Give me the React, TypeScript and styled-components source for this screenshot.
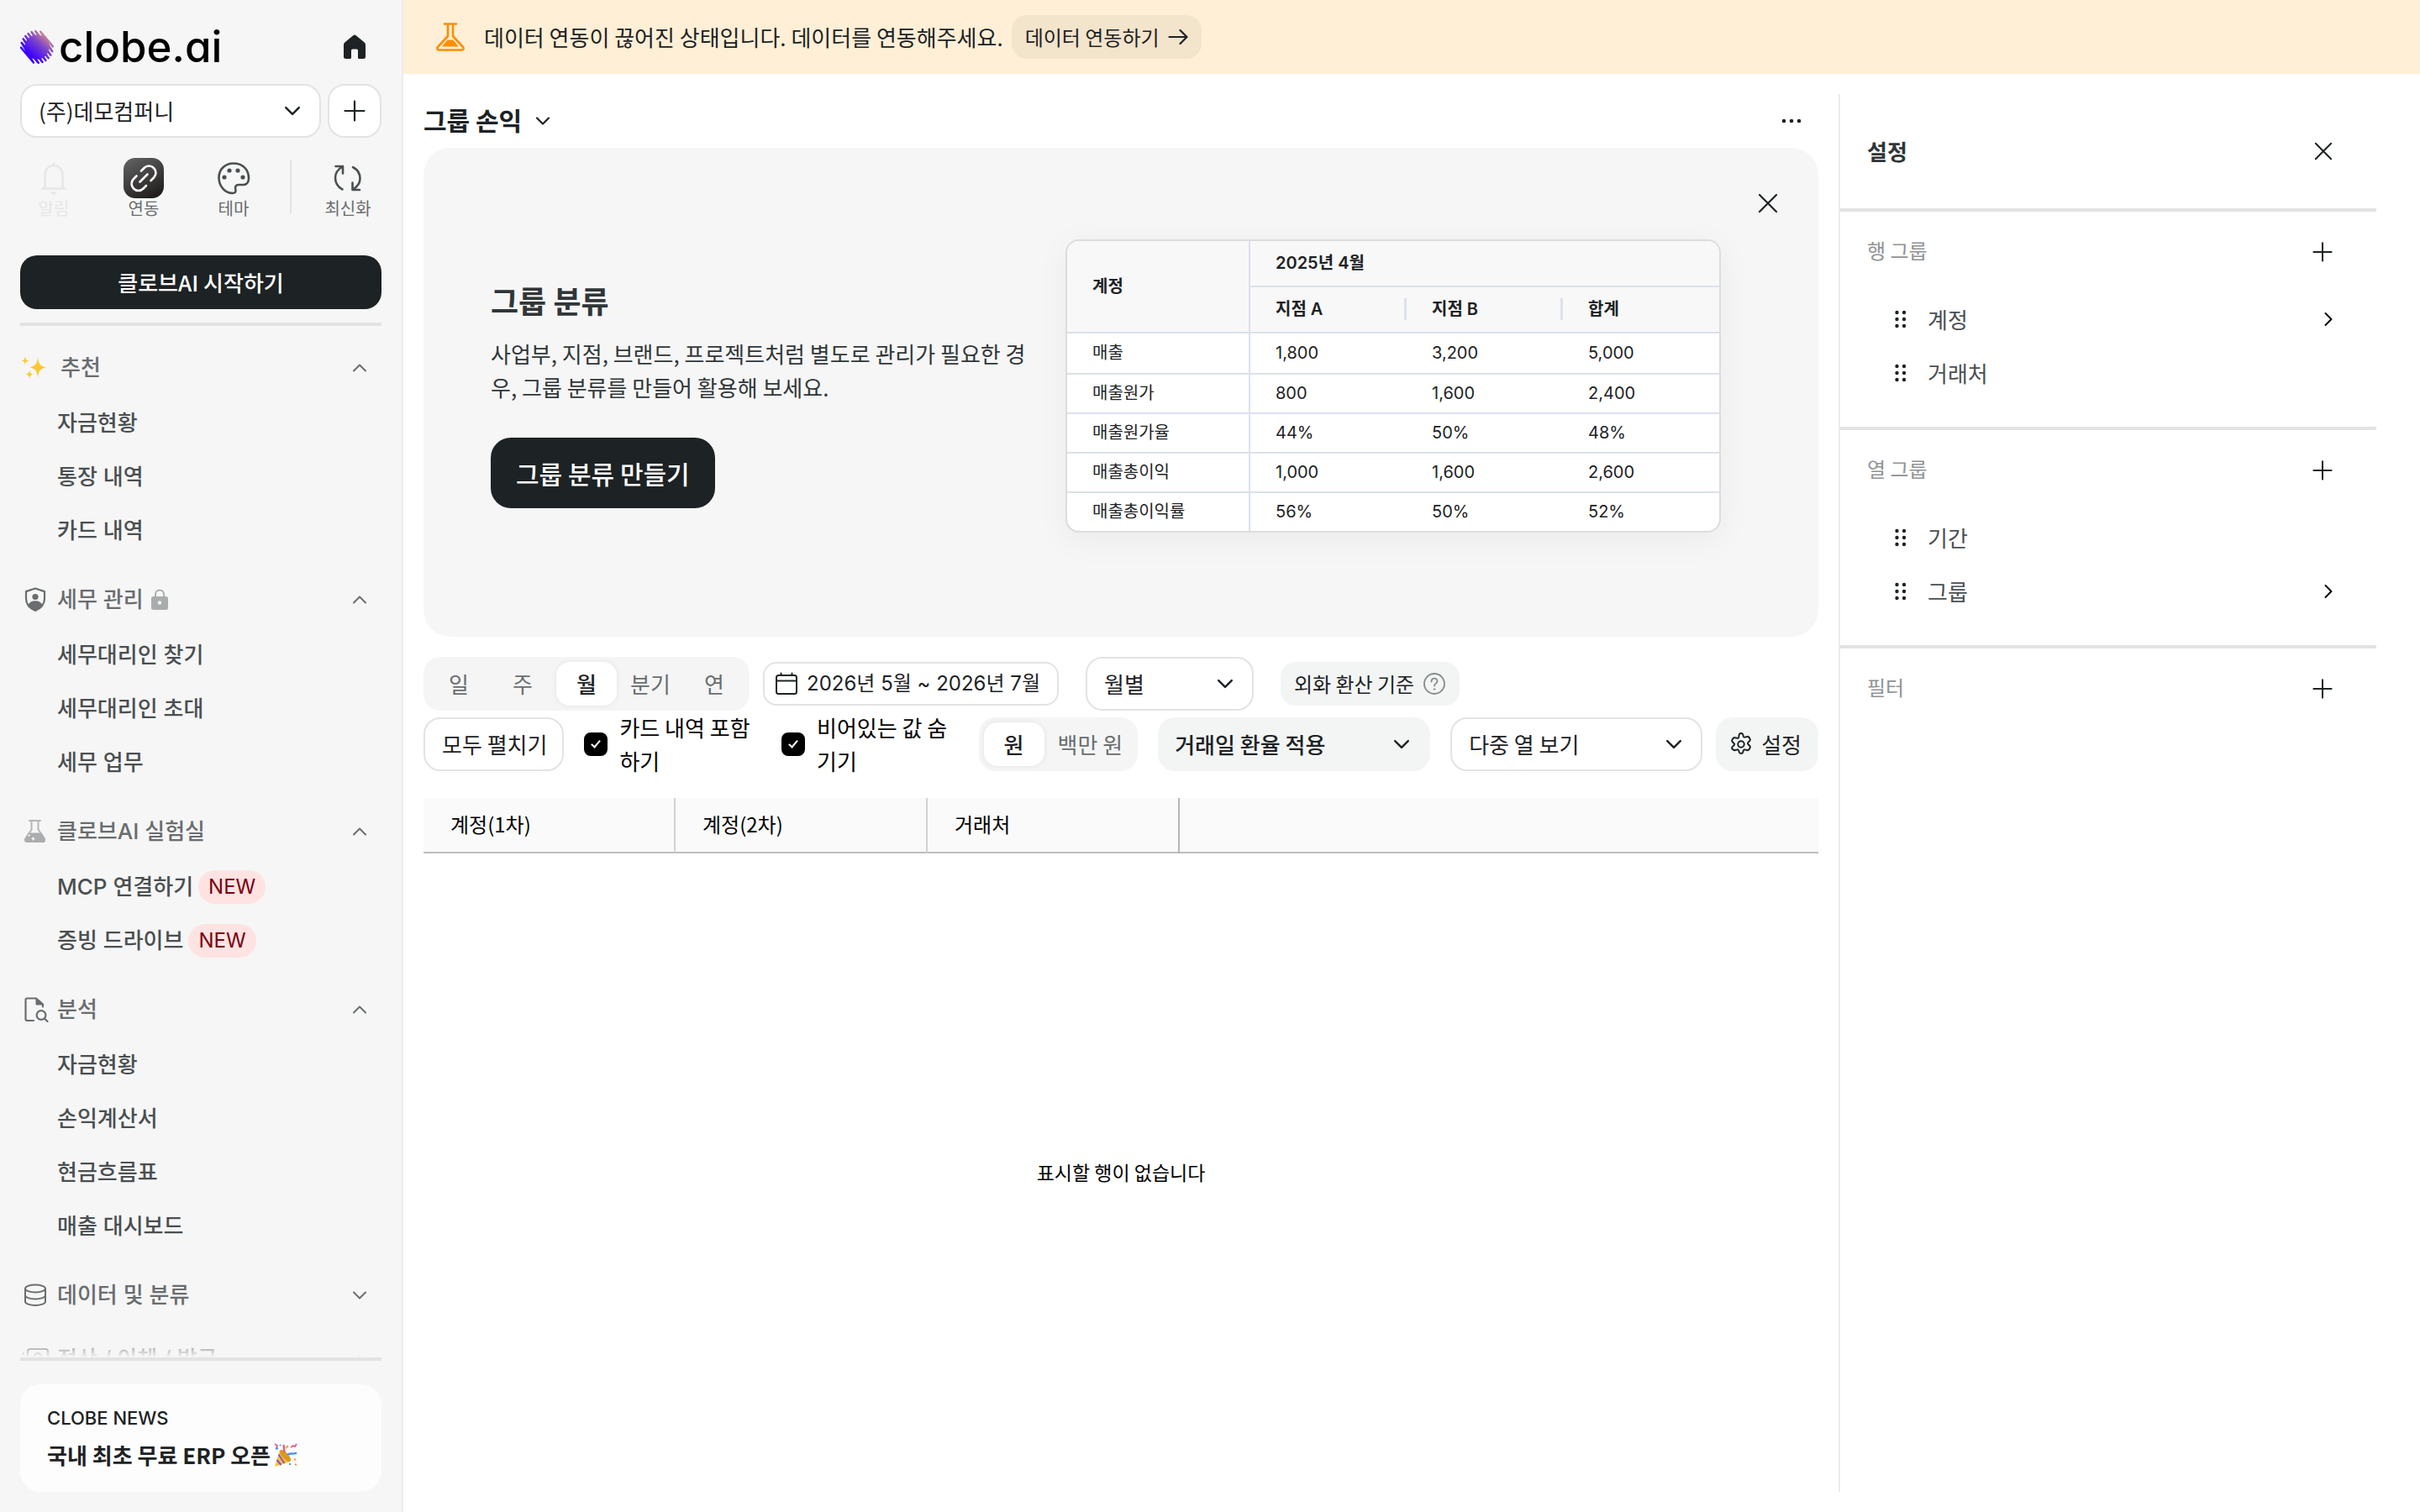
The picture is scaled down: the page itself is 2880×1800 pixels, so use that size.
import React, { useState } from "react";
import styled, { createGlobalStyle, css } from "styled-components";

const krFont = `"Noto Sans CJK KR", "Noto Sans", sans-serif`;
const mixFont = `Inter, "Noto Sans CJK KR", "Noto Sans", sans-serif`;

const color = {
  ink: "#1d2224",
  item: "#4a4f51",
  section: "#696d6f",
  faint: "#8f9294",
  line: "#e3e3e3",
  side: "#f6f6f6",
  soft: "#f3f5f4",
  cell: "#dbe1ec",
};

const GlobalStyle = createGlobalStyle`
  *, *::before, *::after { box-sizing: border-box; }
  body { margin: 0; background: #fff; color: ${color.ink}; font-family: ${krFont}; font-size: 26px; line-height: 40px; }
  button, select, input { font: inherit; color: inherit; margin: 0; }
  button { border: 0; background: none; padding: 0; cursor: pointer; }
  a { color: inherit; text-decoration: none; }
  h1, h2, h3, p, ul { margin: 0; padding: 0; }
  ul { list-style: none; }
  svg { display: block; flex: none; }
`;

/* ---------- icons ---------- */

type IconProps = { size?: number; w?: number; stroke?: string };

const Chevron = ({ dir = "down", size = 18, w = 2, stroke = "currentColor" }: IconProps & { dir?: "up" | "down" | "right" }) => {
  const d = { down: "M2 5.5l7 7 7-7", up: "M2 12.5l7-7 7 7", right: "M5.5 2l7 7-7 7" }[dir];
  return (
    <svg width={size} height={size} viewBox="0 0 18 18" fill="none" stroke={stroke} strokeWidth={w} strokeLinecap="round" strokeLinejoin="round">
      <path d={d} />
    </svg>
  );
};

const Plus = ({ size = 26 }: IconProps) => (
  <svg width={size} height={size} viewBox="0 0 26 26" fill="none" stroke={color.ink} strokeWidth="2.2" strokeLinecap="round">
    <path d="M13 1.5v23M1.5 13h23" />
  </svg>
);

const Cross = ({ size = 24 }: IconProps) => (
  <svg width={size} height={size} viewBox="0 0 24 24" fill="none" stroke={color.ink} strokeWidth="2.2" strokeLinecap="round">
    <path d="M2 2l20 20M22 2L2 22" />
  </svg>
);

const LogoMark = () => {
  const n = 8;
  const pts: string[] = [];
  for (let i = 0; i < n; i++) {
    const t = -15 + (30 * i) / (n - 1);
    const half = Math.sqrt(19 * 19 - t * t);
    const cx = 20 + t * 0.77;
    const cy = 20 - t * 0.64;
    const dx = half * 0.64;
    const dy = half * 0.77;
    pts.push(`${cx - dx},${cy - dy}`, `${cx + dx},${cy + dy}`);
  }
  return (
    <svg width="40" height="40" viewBox="0 0 40 40" fill="none">
      <defs>
        <linearGradient id="mark" x1="12" y1="30" x2="34" y2="5" gradientUnits="userSpaceOnUse">
          <stop offset="0" stopColor="#3a00ff" />
          <stop offset="0.55" stopColor="#8048c8" />
          <stop offset="1" stopColor="#e29a86" />
        </linearGradient>
      </defs>
      <polyline points={pts.join(" ")} stroke="url(#mark)" strokeWidth="2.400" strokeLinejoin="round" strokeLinecap="round" />
      <circle cx="20" cy="20" r="14.500" fill="url(#mark)" />
    </svg>
  );
};

const Home = () => (
  <svg width="28" height="30" viewBox="0 0 28 30" fill={color.ink}>
    <path d="M12.3 1.3a2.6 2.6 0 0 1 3.4 0l10 8.2a3.6 3.6 0 0 1 1.3 2.8V26.500a2.500 2.500 0 0 1-2.500 2.500h-5a1.500 1.500 0 0 1-1.500-1.500v-8.500a1.500 1.500 0 0 0-1.500-1.500h-5a1.500 1.500 0 0 0-1.500 1.500v8.500a1.500 1.500 0 0 1-1.500 1.500h-5A2.500 2.500 0 0 1 1 26.500V12.300a3.600 3.600 0 0 1 1.300-2.800z" />
  </svg>
);

const Bell = () => (
  <svg width="48" height="48" viewBox="0 0 48 48" fill="none" stroke="currentColor" strokeWidth="2.6" strokeLinecap="round" strokeLinejoin="round">
    <path d="M24 8v-1.500M13.500 36V19.500a10.500 10.500 0 0 1 21 0V36M10.500 36.500h27" />
    <path d="M20.500 41h7L24 43.500z" fill="currentColor" strokeWidth="1" />
  </svg>
);

const LinkGlyph = () => (
  <svg width="48" height="48" viewBox="0 0 48 48" fill="none" stroke="#fff" strokeWidth="2.6" strokeLinecap="round" strokeLinejoin="round">
    <rect width="48" height="48" rx="14" fill="url(#linkbg)" stroke="none" />
    <defs>
      <linearGradient id="linkbg" x1="6" y1="0" x2="30" y2="48" gradientUnits="userSpaceOnUse">
        <stop offset="0" stopColor="#626262" />
        <stop offset="1" stopColor="#231f1f" />
      </linearGradient>
    </defs>
    <path d="M21 15.500l3.500-3.500a8 8 0 0 1 11.500 0 8 8 0 0 1 0 11.500l-3.500 3.500" />
    <path d="M27 33l-3.500 3.500a8 8 0 0 1-11.500 0 8 8 0 0 1 0-11.500l3.500-3.500" />
    <path d="M19.500 28.500l9-9" />
  </svg>
);

const Palette = () => (
  <svg width="48" height="48" viewBox="0 0 48 48" fill="none" stroke={color.item} strokeWidth="2.600" strokeLinejoin="round">
    <path d="M24 6.500C13.800 6.500 6.500 13.500 6.500 23.500c0 10.500 7.500 18.500 16 18.500 3.500 0 4.800-2 3.800-4.600-1-2.800.2-5.400 3.700-5.400h5.500c4 0 6.500-3 6.500-8C42 13 34 6.500 24 6.500z" />
    <g fill={color.item} stroke="none">
      <circle cx="19" cy="15" r="2.600" />
      <circle cx="29" cy="15" r="2.600" />
      <circle cx="13" cy="23" r="2.600" />
      <circle cx="35" cy="23" r="2.600" />
    </g>
  </svg>
);

const Refresh = () => (
  <svg width="48" height="48" viewBox="0 0 48 48" fill="none" stroke={color.item} strokeWidth="2.600" strokeLinecap="round" strokeLinejoin="round">
    <path d="M17.500 37.500C11 34 9 28 9 23.500c0-5 2.500-9.500 9-13.500M9.500 10H18v8.500" />
    <path d="M30 11c6.500 3.500 8.500 9 8.500 13.500 0 5-2.500 9.500-9 13.500M38 38h-8.500v-8.500" />
  </svg>
);

const Sparkles = () => (
  <svg width="30" height="28" viewBox="0 0 30 28" fill="#fdc72f">
    <path d="M20 1c1 8 2 10.500 10 12.500-8 1.500-9 4-10 12.500-1-8.500-2-11-10-12.500 8-2 9-4.500 10-12.500z" />
    <path d="M5 0c.5 3.800 1 4.700 4.500 5.500C6 6.200 5.500 7.200 5 11 4.500 7.200 4 6.200.5 5.500 4 4.700 4.500 3.800 5 0zM10 16c.5 3.800 1 4.700 4.500 5.800-3.500.7-4 1.700-4.500 5.700-.5-4-1-5-4.500-5.700C9 20.700 9.500 19.800 10 16z" />
  </svg>
);

const Shield = () => (
  <svg width="36" height="36" viewBox="0 0 36 36" fill="none">
    <path d="M18 4.500l11 3.600v8.400c0 7-4 11.500-11 14.500-7-3-11-7.500-11-14.500V8.100z" stroke={color.section} strokeWidth="2.200" strokeLinejoin="round" />
    <circle cx="18" cy="14.500" r="3.600" fill={color.section} />
    <path d="M9.500 24c2-3.500 5-4.700 8.500-4.700s6.500 1.200 8.500 4.700c-2 3.500-5 5.500-8.500 7-3.500-1.500-6.500-3.500-8.500-7z" fill={color.section} />
  </svg>
);

const Lock = () => (
  <svg width="22" height="26" viewBox="0 0 22 26" fill="none">
    <path d="M6 10V6.500a5 5 0 0 1 10 0V10" stroke="#a9acad" strokeWidth="2" />
    <rect x="1" y="9" width="20" height="16" rx="2.500" fill="#a9acad" />
    <circle cx="11" cy="16.500" r="2.200" fill="#f6f6f6" />
  </svg>
);

const Beaker = () => (
  <svg width="36" height="36" viewBox="0 0 36 36" fill="none">
    <path d="M11 5h13M13.500 5.500v10L6.500 26.500M21.500 5.500v10l7.500 11" stroke="#b4b6b8" strokeWidth="2" strokeLinecap="round" />
    <path d="M9.800 19.500h15.500l4.200 6.500c1.500 3.500 0 5-2.500 5H8.500C6 31 4 29.500 5.500 26z" fill="#abadaf" />
    <path d="M15.500 23.500c.4 2.200.8 2.600 3 3-2.200.4-2.600.8-3 3-.4-2.200-.8-2.600-3-3 2.200-.4 2.600-.8 3-3zM10.500 20.500c.3 1.500.5 1.700 2 2-1.500.3-1.700.5-2 2-.3-1.500-.5-1.700-2-2 1.500-.3 1.700-.5 2-2z" fill="#fff" />
  </svg>
);

const DocSearch = () => (
  <svg width="36" height="36" viewBox="0 0 36 36" fill="none" stroke={color.section} strokeWidth="2.200" strokeLinecap="round">
    <path d="M16 31H8.500A2 2 0 0 1 6.500 29V6.500a2 2 0 0 1 2-2H19l8 7v3" strokeLinejoin="round" />
    <path d="M19 4.500v7.500h8z" fill={color.section} strokeWidth="1" />
    <circle cx="25" cy="24.500" r="5.400" />
    <path d="M29 28.500l3.500 3.500" />
  </svg>
);

const Database = () => (
  <svg width="36" height="36" viewBox="0 0 36 36" fill="none" stroke={color.section} strokeWidth="2">
    <ellipse cx="18" cy="10" rx="12" ry="4.500" />
    <path d="M6 10v15.500c0 2.500 5.400 4.500 12 4.500s12-2 12-4.500V10M6 18c0 2.500 5.400 4.500 12 4.500s12-2 12-4.500" />
  </svg>
);

const Money = () => (
  <svg width="36" height="36" viewBox="0 0 36 36" fill="none" stroke={color.section} strokeWidth="2.200">
    <rect x="9" y="6" width="24" height="20" rx="3" />
    <circle cx="21" cy="15" r="4" />
    <path d="M4 11v1M4 17v1" strokeLinecap="round" />
  </svg>
);

const Party = () => (
  <svg width="28" height="28" viewBox="0 0 28 28" fill="none">
    <path d="M7 8.500L19.500 22 1 28z" fill="#f7c531" />
    <ellipse cx="13.500" cy="15" rx="3.600" ry="9" transform="rotate(-43 13.500 15)" fill="#d99a1c" />
    <path d="M5.500 13.500L12.500 24M3.500 20l5 6" stroke="#8d4fd3" strokeWidth="2" />
    <path d="M12 2c-1 3 1 5 0 9" stroke="#ee5c86" strokeWidth="2.400" />
    <path d="M16 14c3-3 7 0 11-2.500" stroke="#4a90f0" strokeWidth="2.400" />
    <path d="M1 1l3 2-1 3M20 5l3-2 2 1 2-3" stroke="#e8578b" strokeWidth="1.800" />
    <path d="M2 7l3-1M18 25h2M7 2l1 1" stroke="#4a90f0" strokeWidth="2" />
    <path d="M24 19l2 1M25 25l2 1M14 6l3-3" stroke="#e8a33a" strokeWidth="2" />
  </svg>
);

const Flask = () => (
  <svg width="36" height="36" viewBox="0 0 36 36" fill="none" stroke="#ff8d00" strokeWidth="2.600" strokeLinecap="round" strokeLinejoin="round">
    <path d="M11 2.500h14M15 2.500V17L3 30c-1.500 2-.5 3.500 1.500 3.500h27c2 0 3-1.500 1.500-3.500L21 17V2.500" />
    <path d="M15 22h6l6 7H9z" fill="#ff8d00" strokeWidth="1" />
  </svg>
);

const Arrow = () => (
  <svg width="24" height="20" viewBox="0 0 24 20" fill="none" stroke={color.ink} strokeWidth="2.200" strokeLinecap="round" strokeLinejoin="round">
    <path d="M1.500 10h21M14.500 2l8 8-8 8" />
  </svg>
);

const Dots = () => (
  <svg width="24" height="24" viewBox="0 0 24 24" fill={color.ink}>
    <circle cx="3" cy="12" r="2.300" />
    <circle cx="12" cy="12" r="2.300" />
    <circle cx="21" cy="12" r="2.300" />
  </svg>
);

const Calendar = () => (
  <svg width="28" height="28" viewBox="0 0 28 28" fill="none" stroke={color.ink} strokeWidth="2" strokeLinecap="round" strokeLinejoin="round">
    <rect x="2" y="4" width="24" height="22" rx="2.500" />
    <path d="M2 10.500h24M7.500 1.500V4M20.500 1.500V4" />
  </svg>
);

const Question = () => (
  <svg width="28" height="28" viewBox="0 0 28 28" fill="none" stroke="#858a8b" strokeWidth="1.800" strokeLinecap="round">
    <circle cx="14" cy="14" r="12" />
    <path d="M10.500 11.500c0-5 7-5 7-.6 0 2.600-3.500 2.800-3.500 5.600" />
    <circle cx="14" cy="20.500" r=".8" fill="#858a8b" strokeWidth="1" />
  </svg>
);

const Gear = () => (
  <svg width="28" height="28" viewBox="0 0 24 24" fill="none" stroke={color.ink} strokeWidth="1.700" strokeLinejoin="round">
    <path d="M12 .8c1 0 1.700.4 2 1.500l.4 1.600c.2.700.9 1.100 1.600.9l2-.5c1-.3 1.800 0 2.300.9l.7 1.200c.5.900.4 1.600-.3 2.300l-1.500 1.500c-.5.500-.5 1.300 0 1.800l1.500 1.500c.7.700.8 1.500.3 2.400l-.7 1.200c-.5.900-1.300 1.200-2.300.9l-2-.5c-.7-.2-1.400.2-1.600.9l-.4 1.600c-.3 1.100-1 1.500-2 1.500s-1.700-.4-2-1.500l-.4-1.600c-.2-.7-.9-1.100-1.600-.9l-2 .5c-1 .3-1.800 0-2.300-.9L3 16.900c-.5-.9-.4-1.700.3-2.400L4.800 13c.5-.5.500-1.300 0-1.800L3.300 9.700c-.7-.7-.8-1.400-.3-2.300l.7-1.200c.5-.9 1.300-1.200 2.300-.9l2 .5c.7.200 1.400-.2 1.600-.9L10 2.300c.3-1.100 1-1.500 2-1.500z" />
    <circle cx="12" cy="12" r="3.200" />
  </svg>
);

const Grip = () => (
  <svg width="16" height="24" viewBox="0 0 16 24" fill={color.ink}>
    {[4, 12, 20].map((y) => (
      <React.Fragment key={y}>
        <circle cx="3.500" cy={y} r="2.200" />
        <circle cx="12" cy={y} r="2.200" />
      </React.Fragment>
    ))}
  </svg>
);

/* ---------- shell ---------- */

const Shell = styled.div`
  display: grid;
  grid-template-columns: 480px minmax(0, 1fr);
  height: 100vh;
`;

const Sidebar = styled.aside`
  display: flex;
  flex-direction: column;
  min-height: 0;
  padding: 24px;
  background: ${color.side};
  border-right: 2px solid #ededed;
`;

const Brand = styled.div`
  display: flex;
  align-items: center;
  justify-content: space-between;
  height: 76px;
  padding: 0 18px 12px 0;
`;

const Logo = styled.a`
  display: flex;
  align-items: center;
  gap: 6px;
  color: #000;
  font: 500 51px/60px Inter, sans-serif;
  font-feature-settings: "cv11" 1;
`;

const CompanyRow = styled.div`
  display: grid;
  grid-template-columns: minmax(0, 1fr) 64px;
  gap: 8px;
`;

const outlined = css`
  border: 2px solid ${color.line};
  background: #fff;
`;

const SelectWrap = styled.div<{ $width?: number; $soft?: boolean }>`
  display: grid;
  flex: none;
  align-items: center;
  width: ${(p) => (p.$width ? `${p.$width}px` : "auto")};
  > * { grid-area: 1 / 1; }
  > svg { justify-self: end; margin-right: 24px; pointer-events: none; }
  > select {
    appearance: none;
    width: 100%;
    height: 64px;
    padding: 0 48px 0 20px;
    border-radius: 20px;
    font-weight: ${(p) => (p.$soft ? 500 : 400)};
    ${(p) => (p.$soft ? css`border: 0; background: ${color.soft};` : outlined)}
  }
`;

const SquareButton = styled.button`
  display: grid;
  place-items: center;
  height: 64px;
  border-radius: 20px;
  ${outlined}
`;

const Shortcuts = styled.div`
  display: flex;
  justify-content: space-between;
  align-items: center;
  margin: 24px 0 44px;
`;

const Shortcut = styled.button<{ $muted?: boolean }>`
  display: flex;
  flex-direction: column;
  align-items: center;
  width: 80px;
  font-size: 20px;
  line-height: 24px;
  white-space: nowrap;
  color: ${(p) => (p.$muted ? "#e7e7e7" : color.section)};
`;

const Separator = styled.span`
  width: 2px;
  height: 64px;
  margin-bottom: 4px;
  background: ${color.line};
`;

const StartButton = styled.button`
  flex: none;
  height: 64px;
  margin-bottom: 16px;
  border-radius: 20px;
  background: ${color.ink};
  color: #fff;
  font-weight: 500;
`;

const Nav = styled.nav`
  position: relative;
  flex: 1;
  min-height: 0;
  overflow: hidden;
  display: flex;
  flex-direction: column;
  gap: 16px;
  padding-top: 20px;
  border-top: 4px solid ${color.line};
  border-bottom: 4px solid ${color.line};
  &::after {
    content: "";
    position: absolute;
    inset: auto 0 0;
    height: 24px;
    background: linear-gradient(rgba(246, 246, 246, 0), ${color.side});
  }
`;

const NavHead = styled.button`
  display: flex;
  align-items: center;
  gap: 8px;
  width: 100%;
  height: 60px;
  padding-right: 17px;
  color: ${color.section};
  font-family: ${mixFont};
  font-weight: 500;
  > svg:last-child { margin-left: auto; }
`;

const NavIcon = styled.span<{ $emoji?: boolean }>`
  display: grid;
  place-items: center;
  width: ${(p) => (p.$emoji ? 40 : 36)}px;
  padding-right: ${(p) => (p.$emoji ? 8 : 0)}px;
`;

const NavList = styled.ul`
  padding: 4px 0;
`;

const NavLink = styled.a`
  display: flex;
  align-items: center;
  gap: 6px;
  height: 64px;
  padding-left: 44px;
  color: ${color.item};
  font-family: ${mixFont};
  font-weight: 500;
`;

const NewTag = styled.span`
  padding: 0 12px;
  border-radius: 20px;
  background: #ffe3e3;
  color: #79000d;
  font-size: 24px;
  font-weight: 400;
`;

const News = styled.a`
  flex: none;
  display: block;
  margin-top: 28px;
  padding: 18px 32px 22px;
  border-radius: 24px;
  background: #fdfdfd;
  line-height: 44px;
`;

const NewsLabel = styled.div`
  font-family: Inter, sans-serif;
  font-size: 22px;
  font-weight: 500;
`;

const NewsTitle = styled.div`
  display: flex;
  align-items: center;
  gap: 4px;
  font-weight: 700;
`;

/* ---------- main ---------- */

const Page = styled.div`
  display: flex;
  flex-direction: column;
  min-width: 0;
`;

const Banner = styled.div`
  display: flex;
  align-items: center;
  height: 88px;
  padding-left: 38px;
  background: #ffefd6;
`;

const BannerText = styled.p`
  margin: 0 10px 0 22px;
`;

const softButton = css`
  display: inline-flex;
  align-items: center;
  flex: none;
  height: 52px;
  border-radius: 18px;
  background: ${color.soft};
  font-size: 24px;
  white-space: nowrap;
`;

const BannerButton = styled.button`
  ${softButton}
  gap: 10px;
  padding: 0 16px;
  background: #f3e4cc;
`;

const Body = styled.div`
  flex: 1;
  min-height: 0;
  display: grid;
  grid-template-columns: minmax(0, 1fr) 640px;
  gap: 24px;
  padding: 24px 52px 24px 24px;
`;

const Content = styled.main`
  display: flex;
  flex-direction: column;
  min-height: 0;
`;

const TitleRow = styled.div`
  display: flex;
  align-items: center;
  justify-content: space-between;
  height: 64px;
  padding-right: 20px;
`;

const TitleButton = styled.button`
  display: flex;
  align-items: center;
  gap: 16px;
  h1 { padding-bottom: 4px; font-size: 30px; line-height: 40px; font-weight: 700; }
`;

const Hero = styled.section`
  position: relative;
  display: flex;
  align-items: center;
  gap: 32px;
  height: 582px;
  padding: 0 116px 0 80px;
  border-radius: 32px;
  background: ${color.side};
`;

const CloseHero = styled.button`
  position: absolute;
  top: 54px;
  right: 48px;
`;

const HeroText = styled.div`
  flex: 1;
  min-width: 0;
  color: #303638;
  h2 { font-size: 36px; line-height: 56px; font-weight: 700; margin-bottom: 16px; }
`;

const HeroButton = styled.button`
  height: 84px;
  margin-top: 40px;
  padding: 0 30px;
  border-radius: 24px;
  background: ${color.ink};
  color: #fff;
  font-size: 30px;
  font-weight: 500;
`;

const SampleCard = styled.div`
  flex: none;
  margin-bottom: 16px;
  overflow: hidden;
  border: 2px solid #dcdcdc;
  border-radius: 16px;
  background: #fff;
  box-shadow: 0 8px 40px rgba(0, 0, 0, 0.05);
`;

const Sample = styled.table`
  border-collapse: separate;
  border-spacing: 0;
  table-layout: fixed;
  width: 776px;
  font-family: ${mixFont};
  font-size: 20px;
  line-height: 26px;
  th, td { padding: 0 30px; text-align: left; font-weight: 400; }
  thead th { height: 55px; background: #f8f8f8; font-weight: 600; border-bottom: 2px solid ${color.cell}; }
  tbody th, tbody td { height: 47px; }
  tbody tr + tr > * { border-top: 2px solid ${color.cell}; }
  tr > :first-child[scope="row"], thead th[rowspan] { border-right: 2px solid ${color.cell}; }
`;

const SubHead = styled.span`
  display: block;
  margin-right: -30px;
  border-right: 3px solid ${color.cell};
`;

const Toolbar = styled.div`
  display: flex;
  align-items: center;
  margin-top: 24px;
`;

const ToolbarTwo = styled(Toolbar)`
  height: 64px;
  margin: 8px 0 32px;
  gap: 24px;
`;

const Segments = styled.div`
  display: flex;
  flex: none;
  gap: 4px;
  padding: 6px;
  border-radius: 20px;
  background: #f5f5f5;
`;

const Segment = styled.button<{ $on?: boolean }>`
  min-width: 72px;
  height: 52px;
  padding: 0 12px;
  border-radius: 16px;
  white-space: nowrap;
  color: ${(p) => (p.$on ? color.ink : color.section)};
  ${(p) => p.$on && css`background: #fff; font-weight: 500; box-shadow: 0 0 6px rgba(0, 0, 0, 0.08);`}
`;

const DateButton = styled.button`
  display: flex;
  align-items: center;
  gap: 10px;
  height: 52px;
  margin: 0 32px 0 16px;
  padding: 0 20px 0 12px;
  border-radius: 16px;
  font-family: ${mixFont};
  font-size: 24px;
  white-space: nowrap;
  ${outlined}
`;

const RateButton = styled.button`
  ${softButton}
  gap: 10px;
  margin-left: 32px;
  padding: 0 16px;
`;

const OutlineButton = styled.button`
  flex: none;
  height: 64px;
  padding: 0 18px 0 20px;
  border-radius: 20px;
  white-space: nowrap;
  ${outlined}
`;

const CheckLabel = styled.label`
  display: flex;
  flex: 1;
  align-items: center;
  min-width: 0;
  gap: 14px;
  color: #000;
`;

const CheckBox = styled.input`
  appearance: none;
  flex: none;
  display: grid;
  place-items: center;
  width: 28px;
  height: 28px;
  border: 2px solid #000;
  border-radius: 8px;
  background: #fff;
  &:checked { background: #000; }
  &:checked::after {
    content: "";
    width: 6px;
    height: 11px;
    margin-bottom: 3px;
    border: solid #fff;
    border-width: 0 2px 2px 0;
    transform: rotate(40deg);
  }
`;

const RightTools = styled.div`
  display: flex;
  gap: 16px;
`;

const SettingsButton = styled.button`
  ${softButton}
  gap: 10px;
  height: 64px;
  padding: 0 20px 0 16px;
  border-radius: 20px;
  font-size: 26px;
`;

const GridTable = styled.table`
  width: 100%;
  table-layout: fixed;
  border-collapse: separate;
  border-spacing: 0;
  background: #fafafa;
  color: #000;
  th {
    height: 66px;
    padding: 0 32px 2px;
    border-bottom: 2px solid #bdbdbd;
    border-right: 2px solid #d2d2d2;
    text-align: left;
    font-size: 24px;
    font-weight: 400;
  }
  th:nth-child(3) { border-right-color: #b5b5b5; }
  td { border-bottom: 2px solid #bdbdbd; }
`;

const GridCol = styled.col`
  width: 300px;
`;

const Empty = styled.div`
  flex: 1;
  display: grid;
  place-items: center;
  padding-bottom: 2px;
  color: #000;
  font-size: 23px;
`;

/* ---------- settings panel ---------- */

const Panel = styled.aside`
  border-left: 2px solid #ebebeb;
`;

const PanelRow = styled.div`
  display: flex;
  align-items: center;
  justify-content: space-between;
  height: 64px;
  padding: 0 52px 0 32px;
  h3 { padding-bottom: 4px; font-size: 24px; font-weight: 400; color: ${color.faint}; }
`;

const PanelTitle = styled(PanelRow)`
  height: 136px;
  h2 { font-size: 26px; font-weight: 700; color: #303638; }
`;

const PanelSection = styled.section`
  padding: 16px 0 32px;
  border-top: 4px solid ${color.line};
`;

const PanelList = styled.ul`
  margin-top: 16px;
`;

const PanelItem = styled.li`
  display: flex;
  align-items: center;
  gap: 24px;
  height: 64px;
  padding: 0 48px 0 64px;
  color: ${color.item};
  > button { margin-left: auto; }
`;

/* ---------- data ---------- */

type NavSection = {
  title: string;
  icon: React.ReactNode;
  emoji?: boolean;
  locked?: boolean;
  closed?: boolean;
  items: { label: string; isNew?: boolean }[];
};

const sections: NavSection[] = [
  { title: "추천", icon: <Sparkles />, emoji: true, items: [{ label: "자금현황" }, { label: "통장 내역" }, { label: "카드 내역" }] },
  { title: "세무 관리", icon: <Shield />, locked: true, items: [{ label: "세무대리인 찾기" }, { label: "세무대리인 초대" }, { label: "세무 업무" }] },
  { title: "클로브AI 실험실", icon: <Beaker />, items: [{ label: "MCP 연결하기", isNew: true }, { label: "증빙 드라이브", isNew: true }] },
  { title: "분석", icon: <DocSearch />, items: [{ label: "자금현황" }, { label: "손익계산서" }, { label: "현금흐름표" }, { label: "매출 대시보드" }] },
  { title: "데이터 및 분류", icon: <Database />, closed: true, items: [] },
  { title: "정산 / 이체 / 발급", icon: <Money />, items: [] },
];

const sampleRows = [
  ["매출", "1,800", "3,200", "5,000"],
  ["매출원가", "800", "1,600", "2,400"],
  ["매출원가율", "44%", "50%", "48%"],
  ["매출총이익", "1,000", "1,600", "2,600"],
  ["매출총이익률", "56%", "50%", "52%"],
];

const periods = ["일", "주", "월", "분기", "연"];

const panels = [
  { title: "행 그룹", items: [{ label: "계정", more: true }, { label: "거래처" }] },
  { title: "열 그룹", items: [{ label: "기간" }, { label: "그룹", more: true }] },
  { title: "필터", items: [] as { label: string; more?: boolean }[] },
];

function SideNav() {
  return (
    <Nav>
      {sections.map((s) => (
        <div key={s.title}>
          <NavHead type="button" aria-expanded={!s.closed}>
            <NavIcon $emoji={s.emoji}>{s.icon}</NavIcon>
            {s.title}
            {s.locked && <Lock />}
            <Chevron dir={s.closed ? "down" : "up"} />
          </NavHead>
          {s.items.length > 0 && (
            <NavList>
              {s.items.map((item) => (
                <li key={item.label}>
                  <NavLink href="#">
                    {item.label}
                    {item.isNew && <NewTag>NEW</NewTag>}
                  </NavLink>
                </li>
              ))}
            </NavList>
          )}
        </div>
      ))}
    </Nav>
  );
}

function HeroSection() {
  return (
    <Hero>
      <HeroText>
        <h2>그룹 분류</h2>
        <p>사업부, 지점, 브랜드, 프로젝트처럼 별도로 관리가 필요한 경우, 그룹 분류를 만들어 활용해 보세요.</p>
        <HeroButton type="button">그룹 분류 만들기</HeroButton>
      </HeroText>
      <SampleCard>
        <Sample>
          <colgroup>
            <col width="218" />
            <col />
            <col />
            <col />
          </colgroup>
          <thead>
            <tr>
              <th rowSpan={2}>계정</th>
              <th colSpan={3}>2025년 4월</th>
            </tr>
            <tr>
              <th><SubHead>지점 A</SubHead></th>
              <th><SubHead>지점 B</SubHead></th>
              <th>합계</th>
            </tr>
          </thead>
          <tbody>
            {sampleRows.map(([name, ...values]) => (
              <tr key={name}>
                <th scope="row">{name}</th>
                {values.map((v, i) => (
                  <td key={i}>{v}</td>
                ))}
              </tr>
            ))}
          </tbody>
        </Sample>
      </SampleCard>
      <CloseHero type="button" aria-label="닫기"><Cross /></CloseHero>
    </Hero>
  );
}

function Select({ label, value, width, soft }: { label: string; value: string; width?: number; soft?: boolean }) {
  return (
    <SelectWrap $width={width} $soft={soft}>
      <select aria-label={label} defaultValue={value}>
        <option>{value}</option>
      </select>
      <Chevron size={20} w={2.2} />
    </SelectWrap>
  );
}

export default function App() {
  const [period, setPeriod] = useState("월");
  const [unit, setUnit] = useState("원");
  return (
    <>
      <GlobalStyle />
      <Shell>
        <Sidebar>
          <Brand>
            <Logo href="#"><LogoMark />clobe.ai</Logo>
            <button type="button" aria-label="홈"><Home /></button>
          </Brand>
          <CompanyRow>
            <Select label="회사" value="(주)데모컴퍼니" />
            <SquareButton type="button" aria-label="회사 추가"><Plus /></SquareButton>
          </CompanyRow>
          <Shortcuts>
            <Shortcut type="button" $muted><Bell />알림</Shortcut>
            <Shortcut type="button"><LinkGlyph />연동</Shortcut>
            <Shortcut type="button"><Palette />테마</Shortcut>
            <Separator />
            <Shortcut type="button"><Refresh />최신화</Shortcut>
          </Shortcuts>
          <StartButton type="button">클로브AI 시작하기</StartButton>
          <SideNav />
          <News href="#">
            <NewsLabel>CLOBE NEWS</NewsLabel>
            <NewsTitle>국내 최초 무료 ERP 오픈<Party /></NewsTitle>
          </News>
        </Sidebar>

        <Page>
          <Banner>
            <Flask />
            <BannerText>데이터 연동이 끊어진 상태입니다. 데이터를 연동해주세요.</BannerText>
            <BannerButton type="button">데이터 연동하기<Arrow /></BannerButton>
          </Banner>
          <Body>
            <Content>
              <TitleRow>
                <TitleButton type="button">
                  <h1>그룹 손익</h1>
                  <Chevron w={2.2} />
                </TitleButton>
                <button type="button" aria-label="더보기"><Dots /></button>
              </TitleRow>
              <HeroSection />
              <Toolbar>
                <Segments>
                  {periods.map((p) => (
                    <Segment key={p} type="button" $on={p === period} onClick={() => setPeriod(p)}>{p}</Segment>
                  ))}
                </Segments>
                <DateButton type="button"><Calendar />2026년 5월 ~ 2026년 7월</DateButton>
                <Select label="기간 단위" value="월별" width={200} />
                <RateButton type="button">외화 환산 기준<Question /></RateButton>
              </Toolbar>
              <ToolbarTwo>
                <OutlineButton type="button">모두 펼치기</OutlineButton>
                <CheckLabel><CheckBox type="checkbox" defaultChecked />카드 내역 포함하기</CheckLabel>
                <CheckLabel><CheckBox type="checkbox" defaultChecked />비어있는 값 숨기기</CheckLabel>
                <Segments>
                  {["원", "백만 원"].map((u) => (
                    <Segment key={u} type="button" $on={u === unit} onClick={() => setUnit(u)}>{u}</Segment>
                  ))}
                </Segments>
                <Select label="환율" value="거래일 환율 적용" width={324} soft />
                <RightTools>
                  <Select label="열 보기" value="다중 열 보기" width={300} />
                  <SettingsButton type="button"><Gear />설정</SettingsButton>
                </RightTools>
              </ToolbarTwo>
              <GridTable>
                <colgroup><GridCol /><GridCol /><GridCol /><col /></colgroup>
                <thead>
                  <tr>
                    <th>계정(1차)</th>
                    <th>계정(2차)</th>
                    <th>거래처</th>
                    <td />
                  </tr>
                </thead>
              </GridTable>
              <Empty>표시할 행이 없습니다</Empty>
            </Content>
            <Panel>
              <PanelTitle>
                <h2>설정</h2>
                <button type="button" aria-label="설정 닫기"><Cross size={22} /></button>
              </PanelTitle>
              {panels.map((s) => (
                <PanelSection key={s.title}>
                  <PanelRow>
                    <h3>{s.title}</h3>
                    <button type="button" aria-label={`${s.title} 추가`}><Plus size={24} /></button>
                  </PanelRow>
                  {s.items.length > 0 && (
                    <PanelList>
                      {s.items.map((item) => (
                        <PanelItem key={item.label}>
                          <Grip />
                          {item.label}
                          {item.more && <button type="button" aria-label={`${item.label} 열기`}><Chevron dir="right" stroke="#000" /></button>}
                        </PanelItem>
                      ))}
                    </PanelList>
                  )}
                </PanelSection>
              ))}
            </Panel>
          </Body>
        </Page>
      </Shell>
    </>
  );
}
